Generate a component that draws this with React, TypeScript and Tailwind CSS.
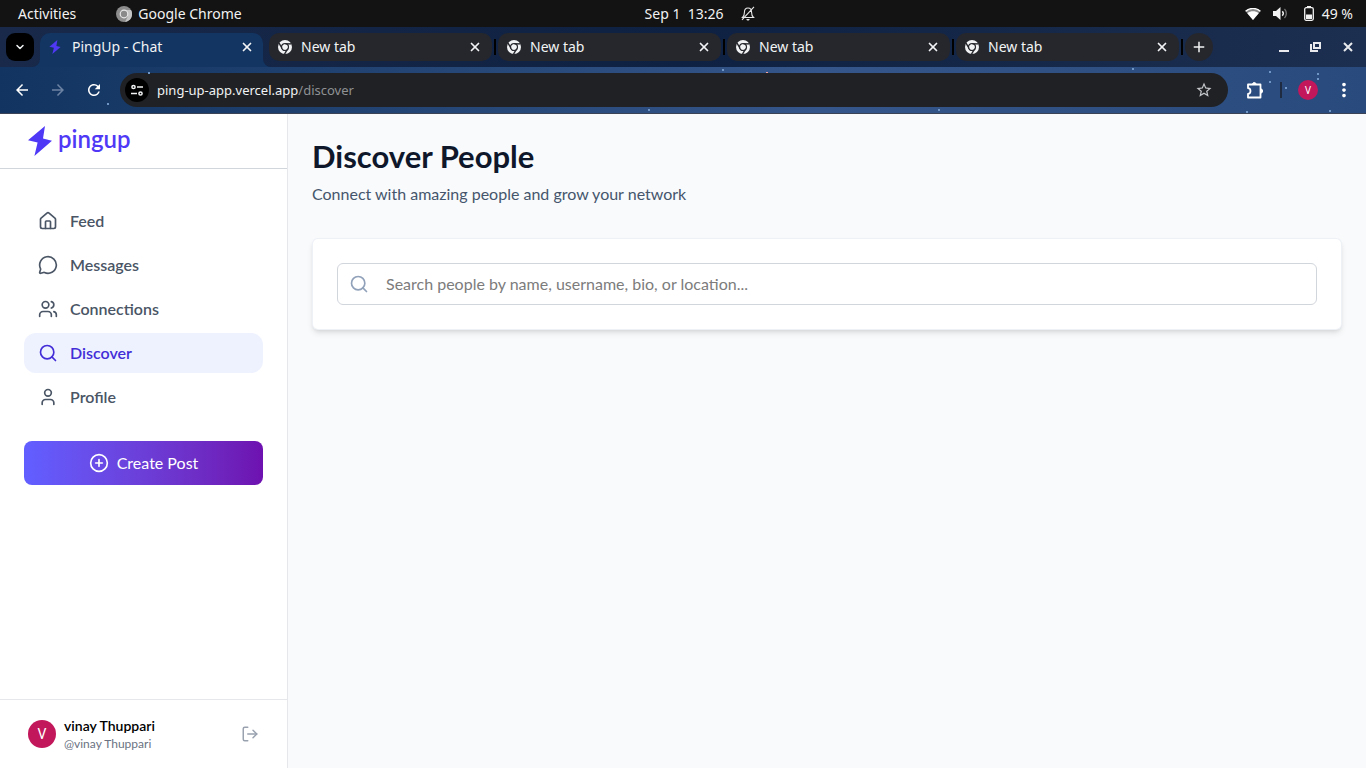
import React from "react";
import {
  ChevronDown,
  CirclePlus,
  House,
  LogOut,
  MessageCircle,
  Search,
  User,
  Users,
  X,
  type LucideIcon,
} from "lucide-react";
import { MdAdd, MdArrowBack, MdArrowForward, MdMoreVert, MdRefresh, MdStarBorder } from "react-icons/md";

function ChromeMark({ className }: { className: string }) {
  return (
    <svg viewBox="0 0 24 24" className={className} aria-hidden="true">
      <circle cx="12" cy="12" r="12" fill="#f1f3f4" />
      <g stroke="#25272d" strokeWidth="2.4" fill="none">
        <path d="M12 6.6H23" />
        <path d="M7.3 14.7 1.8 5.2" />
        <path d="M16.7 14.7 11.2 24.2" />
        <circle cx="12" cy="12" r="5.8" />
      </g>
      <circle cx="12" cy="12" r="4.4" fill="#f1f3f4" />
    </svg>
  );
}

function Bolt({ className }: { className: string }) {
  return (
    <svg viewBox="0 0 24 30" className={className} aria-hidden="true">
      <path d="M17 0 0 14.3l9.6 2.2L6.4 30 24 14.8l-9-2.2Z" fill="#4f39f6" />
    </svg>
  );
}

function SystemBar() {
  return (
    <div className="grid h-[27px] shrink-0 grid-cols-[1fr_auto_1fr] items-center bg-[#131313] text-[14px] leading-5 text-[#f2f2f2]">
      <div className="flex items-center gap-10 pl-[18px]">
        <button type="button">Activities</button>
        <button type="button" className="flex items-center gap-1.5">
          <svg viewBox="0 0 16 16" className="size-4" aria-hidden="true">
            <circle cx="8" cy="8" r="8" fill="#8d8d8d" />
            <path d="M8 4h7a8 8 0 0 1-6 12l3-6Z" fill="#c4c4c4" />
            <circle cx="8" cy="8" r="4.4" fill="#e8e8e8" />
            <circle cx="8" cy="8" r="3.2" fill="#8a8a8a" />
          </svg>
          Google Chrome
        </button>
      </div>
      <div className="flex items-center gap-[18px] pl-[34px]">
        <span className="whitespace-pre">Sep 1  13:26</span>
        <svg viewBox="0 0 14 15" className="h-[15px] w-3.5" fill="none" stroke="#e8e8e8" strokeWidth="1.1" aria-hidden="true">
          <path d="M1.5 11.5h11c-1.6-1.4-1.9-2.8-1.9-5C10.6 3.6 9.3 2 7 2S3.4 3.6 3.4 6.5c0 2.2-.3 3.6-1.9 5ZM13 .8 1 13.8" />
          <path d="M5.3 13h3.4c-.3 1-.9 1.5-1.7 1.5S5.6 14 5.3 13Z" fill="#e8e8e8" stroke="none" />
        </svg>
      </div>
      <div className="flex items-center justify-end gap-3 pr-[13px]">
        <svg viewBox="0 0 16 12" className="h-3 w-4" aria-hidden="true">
          <path d="M8 12 .4 3C4.7-.8 11.3-.8 15.6 3Z" fill="#8a8a8a" />
          <path d="M8 12 2.3 5.2c3.3-2.500 8.100-2.500 11.400 0Z" fill="#fff" />
          <path d="M.6 3.2c4.3-3.7 10.5-3.7 14.8 0" fill="none" stroke="#fff" strokeWidth="1.3" />
        </svg>
        <svg viewBox="0 0 15 13" className="h-[13px] w-[15px]" fill="none" aria-hidden="true">
          <path d="M0 4h3l4.5-4v13L3 9H0Z" fill="#f2f2f2" />
          <path d="M9.3 4.3a3.2 3.2 0 0 1 0 4.4" stroke="#f2f2f2" strokeWidth="1.4" />
          <path d="M11.5 2a6.5 6.5 0 0 1 0 9" stroke="#777" strokeWidth="1.3" />
        </svg>
        <span className="flex items-center gap-2 pl-1">
          <svg viewBox="0 0 10 15" className="h-[15px] w-2.5" aria-hidden="true">
            <path d="M3 0h4v2H3Z" fill="#f2f2f2" />
            <rect x=".7" y="1.7" width="8.6" height="12.6" rx="1.5" fill="none" stroke="#f2f2f2" strokeWidth="1.3" />
            <path d="M2 8.5h6V13H2Z" fill="#f2f2f2" />
          </svg>
          49 %
        </span>
      </div>
    </div>
  );
}

function InactiveTab() {
  return (
    <>
      <div className="flex h-7 w-[223px] min-w-0 shrink items-center rounded-[10px] bg-[#25272d] pr-2.5 pl-[9px]">
        <ChromeMark className="size-3.5 shrink-0" />
        <a href="#newtab" className="flex-1 truncate pl-[9px]">New tab</a>
        <button type="button" aria-label="Close tab">
          <X className="size-3.5" strokeWidth={3} />
        </button>
      </div>
      <div className="mx-0.5 h-4 w-0.5 shrink-0 bg-black" />
    </>
  );
}

function TabStrip() {
  return (
    <div className="flex h-10 shrink-0 items-start bg-linear-to-r from-[#18294a] via-[#0f2142] to-[#1d2f50] pt-1.5 pl-1.5 text-[14px] leading-5 text-[#f1f3f4]">
      <button type="button" aria-label="Search tabs" className="grid size-7 shrink-0 place-items-center rounded-[9px] bg-black">
        <ChevronDown className="size-3" strokeWidth={3} />
      </button>
      <div className="relative mx-1.5 h-[34px] w-[223px] min-w-0 shrink">
        <svg viewBox="0 0 239 8" className="absolute bottom-0 -left-2 h-2 w-[239px]" aria-hidden="true">
          <path d="M0 8a8 8 0 0 0 8-8v8ZM239 8a8 8 0 0 1-8-8v8Z" fill="#133562" />
        </svg>
        <div className="flex h-full items-start rounded-t-[10px] bg-[#133562] pr-[9px] pl-[9px]">
          <div className="flex h-7 flex-1 items-center">
            <Bolt className="h-[14px] w-3" />
            <a href="#chat" className="flex-1 truncate pl-[11px]">PingUp - Chat</a>
            <button type="button" aria-label="Close tab">
              <X className="size-3.5" strokeWidth={3} />
            </button>
          </div>
        </div>
      </div>
      <div className="flex h-7 min-w-0 items-center">
        <InactiveTab />
        <InactiveTab />
        <InactiveTab />
        <InactiveTab />
        <button type="button" aria-label="New tab" className="grid size-7 shrink-0 place-items-center rounded-full bg-[#25272d]">
          <MdAdd className="size-[18px]" />
        </button>
      </div>
      <div className="ml-auto flex h-7 items-center gap-[21px] pr-3 text-white">
        <button type="button" aria-label="Minimize">
          <svg viewBox="0 0 10 12" className="h-3 w-2.5" aria-hidden="true">
            <path d="M0 9h10v2H0Z" fill="#e8eaed" />
          </svg>
        </button>
        <button type="button" aria-label="Restore">
          <svg viewBox="0 0 11 10" className="h-2.5 w-[11px]" fill="none" stroke="#e8eaed" aria-hidden="true">
            <path d="M4 1h6v5H4Z" strokeWidth="2" />
            <path d="M1 2v7h7" strokeWidth="2" />
          </svg>
        </button>
        <button type="button" aria-label="Close window">
          <svg viewBox="0 0 12 12" className="size-3" stroke="#e8eaed" strokeWidth="2" aria-hidden="true">
            <path d="m2 2 8 8M10 2l-8 8" />
          </svg>
        </button>
      </div>
    </div>
  );
}

const stars = [
  [107, 36], [148, 5], [648, 42], [722, 2], [938, 42], [1132, 1], [1246, 44],
  [1269, 4], [1269, 14], [1285, 20], [1317, 6], [1317, 11], [1329, 43],
];

function Toolbar() {
  return (
    <div className="relative flex h-[47px] shrink-0 items-center border-b border-[#3a4456] bg-linear-to-r from-[#123460] via-[#34568a] via-60% to-[#284a7c] pr-[11px] pl-[13px] text-white">
      <svg className="pointer-events-none absolute inset-0 size-full" aria-hidden="true">
        {stars.map(([x, y]) => (
          <rect key={`${x}-${y}`} x={x} y={y} width="2" height="2" fill="#6f96c4" />
        ))}
        <rect x="766" y="5" width="2" height="1" fill="#f0a0a0" />
      </svg>
      <div className="flex items-center gap-[18px]">
        <button type="button" aria-label="Back"><MdArrowBack className="size-[18px]" /></button>
        <button type="button" aria-label="Forward"><MdArrowForward className="size-[18px] text-[#6d83a3]" /></button>
        <button type="button" aria-label="Reload"><MdRefresh className="size-[18px]" /></button>
      </div>
      <div className="ml-[17px] flex h-[34px] min-w-0 flex-1 items-center rounded-full bg-[#202124] pr-[15px] pl-[5px]">
        <button type="button" aria-label="Site information" className="grid size-6 shrink-0 place-items-center rounded-full bg-black">
          <svg viewBox="0 0 12 12" className="size-3" fill="none" stroke="#f1f3f4" strokeWidth="1.5" aria-hidden="true">
            <circle cx="2.5" cy="3" r="1.6" />
            <path d="M6 3h6M0 9.5h6" />
            <circle cx="9.5" cy="9.5" r="1.6" />
          </svg>
        </button>
        <a href="#discover" className="flex-1 truncate pl-2 text-[13px] leading-5 text-[#f1f3f4]">
          ping-up-app.vercel.app<span className="text-[#8f9195]">/discover</span>
        </a>
        <button type="button" aria-label="Bookmark this page"><MdStarBorder className="size-[18px] text-[#c4c7cb]" /></button>
      </div>
      <div className="flex items-center pl-[18px]">
        <button type="button" aria-label="Extensions">
          <svg viewBox="0 0 18 18" className="size-[18px]" fill="none" aria-hidden="true">
            <path d="M2 3.5h12.500V16.500H2v-3.600c3.300-.2 3.300-5.500 0-5.800Z" stroke="#fff" strokeWidth="1.8" strokeLinejoin="round" />
            <path d="M6.500 3.500a1.800 2 0 0 1 3.600 0ZM14.500 7.800a2.100 2.200 0 0 1 0 4.400Z" fill="#fff" stroke="#fff" />
          </svg>
        </button>
        <div className="ml-4 h-4 w-0.5 bg-[#1f2b40]" />
        <button type="button" aria-label="Browser profile" className="ml-4 grid size-5 place-items-center rounded-full bg-[#c2185b] text-[10px] leading-none">V</button>
        <button type="button" aria-label="Browser menu" className="ml-[15px]"><MdMoreVert className="size-[22px]" /></button>
      </div>
    </div>
  );
}

const links: { label: string; icon: LucideIcon; active?: boolean }[] = [
  { label: "Feed", icon: House },
  { label: "Messages", icon: MessageCircle },
  { label: "Connections", icon: Users },
  { label: "Discover", icon: Search, active: true },
  { label: "Profile", icon: User },
];

function Sidebar() {
  return (
    <aside className="flex w-72 shrink-0 flex-col border-r border-gray-200 bg-white">
      <a href="#home" className="flex h-[55px] items-center gap-1.5 border-b border-gray-300 pl-7">
        <Bolt className="h-[30px] w-6" />
        <span className="pb-1 text-[24px] leading-8 font-semibold text-[#4f39f6]">pingup</span>
      </a>
      <nav className="flex flex-col gap-1 px-6 pt-8">
        {links.map(({ label, icon: Icon, active }) => (
          <a
            key={label}
            href={`#${label.toLowerCase()}`}
            className={
              active
                ? "flex h-10 items-center gap-3 rounded-xl bg-indigo-50 px-3.5 font-semibold text-indigo-700"
                : "flex h-10 items-center gap-3 rounded-xl px-3.5 font-semibold text-gray-600"
            }
          >
            <Icon className="size-5" />
            {label}
          </a>
        ))}
      </nav>
      <button
        type="button"
        className="mx-6 mt-6 flex h-11 items-center justify-center gap-2 rounded-lg bg-linear-to-r from-indigo-500 to-purple-800 text-white"
      >
        <CirclePlus className="size-5" />
        Create Post
      </button>
      <div className="mt-auto flex h-[69px] items-center gap-2 border-t border-gray-200 pr-7 pl-7">
        <div className="grid size-7 place-items-center rounded-full bg-[#c2185b] font-['Roboto',sans-serif] text-[14px] leading-5 text-white">V</div>
        <div className="flex-1">
          <p className="text-[14px] leading-5 font-semibold text-black">vinay Thuppari</p>
          <p className="text-[12px] leading-4 text-gray-500">@vinay Thuppari</p>
        </div>
        <button type="button" aria-label="Log out">
          <LogOut className="size-[18px] text-gray-400" />
        </button>
      </div>
    </aside>
  );
}

export default function App() {
  return (
    <div className="flex min-h-screen flex-col font-['Noto_Sans',sans-serif]">
      <SystemBar />
      <TabStrip />
      <Toolbar />
      <div className="flex flex-1 font-['Lato',sans-serif] text-[16px] leading-6">
        <Sidebar />
        <main className="min-w-0 flex-1 bg-slate-50 p-6">
          <h1 className="text-[31px] leading-9 font-bold text-slate-900">Discover People</h1>
          <p className="mt-2 text-slate-600">Connect with amazing people and grow your network</p>
          <div className="mt-8 rounded-md border border-slate-200/60 bg-white p-6 shadow-md">
            <div className="relative">
              <Search className="absolute top-1/2 left-3 size-5 -translate-y-1/2 text-slate-400" />
              <input
                type="search"
                aria-label="Search people"
                placeholder="Search people by name, username, bio, or location..."
                className="h-[42px] w-full rounded-md border border-gray-300 bg-white pr-3 pb-0.5 pl-12 placeholder:text-[#7c7c7c]"
              />
            </div>
          </div>
        </main>
      </div>
    </div>
  );
}
